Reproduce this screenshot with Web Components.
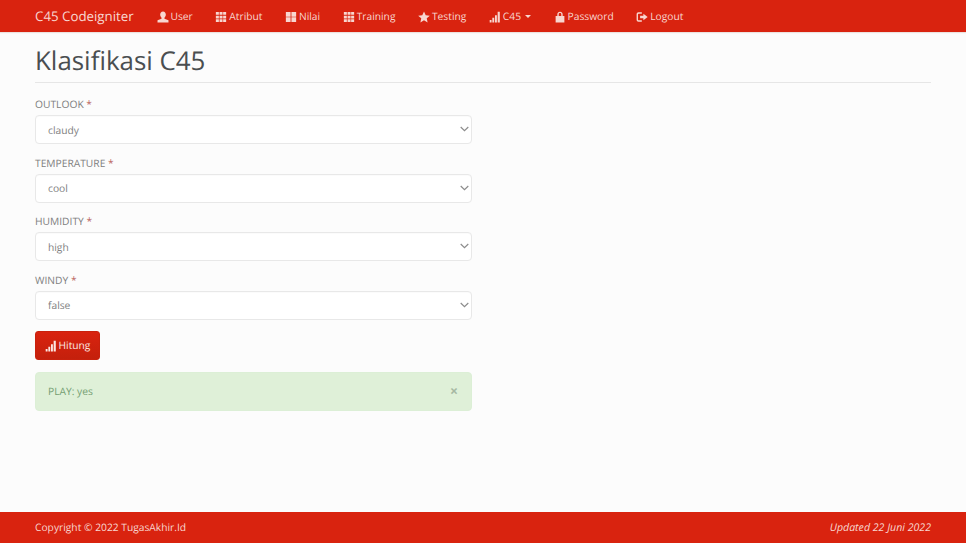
<!DOCTYPE html>
<html lang="id">
<head>
<meta charset="utf-8">
<title>Klasifikasi C45</title>
<style>
    html, body { margin: 0; height: 100%; }
    body {
        display: flex;
        flex-direction: column;
        height: 543px;
        overflow: hidden;
        background: #fcfcfc;
        font-family: "Open Sans", "Liberation Sans", sans-serif;
        font-size: 10.25px;
        color: #777;
        text-rendering: geometricPrecision;
    }
</style>
</head>
<body>
<app-navbar brand="C45 Codeigniter">
    <nav-link icon="user">User</nav-link>
    <nav-link icon="th">Atribut</nav-link>
    <nav-link icon="th-large">Nilai</nav-link>
    <nav-link icon="th">Training</nav-link>
    <nav-link icon="star">Testing</nav-link>
    <nav-link icon="signal" caret>C45</nav-link>
    <nav-link icon="lock">Password</nav-link>
    <nav-link icon="logout">Logout</nav-link>
</app-navbar>

<page-body heading="Klasifikasi C45">
    <form-select label="OUTLOOK" value="claudy"></form-select>
    <form-select label="TEMPERATURE" value="cool"></form-select>
    <form-select label="HUMIDITY" value="high"></form-select>
    <form-select label="WINDY" value="false"></form-select>
    <app-button icon="signal">Hitung</app-button>
    <app-alert>PLAY: yes</app-alert>
</page-body>

<app-footer updated="Updated 22 Juni 2022">Copyright © 2022 TugasAkhir.Id</app-footer>

<script>
// Glyph shapes, drawn on a 14x14 box
const ICONS = {
    user: '<path d="M7 .6c2.100 0 3.300 1.600 3.300 3.600 0 1.600-.7 3-1.600 3.700v1.100l4.700 1.800v2.600H.6v-2.600l4.700-1.800V7.900C4.400 7.200 3.700 5.800 3.700 4.200 3.700 2.200 4.900.6 7 .6z"/>',
    th: '<path d="M1 1.200h3.500v3.300H1zM5.300 1.200h3.500v3.300H5.300zM9.500 1.200H13v3.300H9.500zM1 5.400h3.500v3.300H1zM5.300 5.400h3.500v3.300H5.300zM9.500 5.400H13v3.300H9.500zM1 9.500h3.500v3.300H1zM5.300 9.500h3.500v3.300H5.300zM9.500 9.500H13v3.300H9.500z"/>',
    'th-large': '<path d="M1 1.200h5.500v5.400H1zM7.500 1.200H13v5.400H7.500zM1 7.400h5.500v5.400H1zM7.500 7.400H13v5.400H7.500z"/>',
    star: '<path d="M7 .5l2 4.400 4.800.5-3.600 3.200 1 4.700L7 10.900l-4.200 2.400 1-4.700L.2 5.400 5 4.900z"/>',
    signal: '<path d="M.8 10.500h2.200v3H.8zM3.900 8h2.200v5.500H3.900zM7 5h2.200v8.500H7zM10.100 1h2.500v12.500h-2.500z"/>',
    lock: '<path d="M3.900 5.800V4C3.900 2 5.200.8 7 .8S10.100 2 10.100 4v1.800h2v7.700H1.900V5.800zM5.500 5.800h3V4c0-1-.5-1.600-1.500-1.600S5.500 3 5.500 4z"/>',
    logout: '<path d="M6.800 1.500v1.700H3.300c-.7 0-1 .3-1 1v5.600c0 .7.3 1 1 1h3.500v1.700H3c-1.400 0-2.300-.9-2.300-2.300V3.800C.7 2.400 1.600 1.500 3 1.500zM8.600 3.200L13.600 7l-5 3.800V8.400H4.800V5.600h3.800z"/>'
};

function iconSvg(name, size) {
    return `<svg width="${size}" height="${size}" viewBox="0 0 14 14" fill="currentColor" aria-hidden="true">${ICONS[name]}</svg>`;
}

class AppNavbar extends HTMLElement {
    connectedCallback() {
        this.attachShadow({ mode: 'open' }).innerHTML = `
            <style>
                :host {
                    display: flex;
                    align-items: center;
                    flex: none;
                    height: 32px;
                    padding-left: 35px;
                    background: #d9230f;
                    box-shadow: 0 1px 1px rgba(120, 40, 20, .12);
                    color: #f8d6d0;
                }
                .brand { font-size: 13.300px; margin-right: 11.500px; white-space: nowrap; }
            </style>
            <span class="brand">${this.getAttribute('brand')}</span>
            <slot></slot>
        `;
    }
}

class NavLink extends HTMLElement {
    connectedCallback() {
        const caret = this.hasAttribute('caret') ? '<span class="caret"></span>' : '';
        this.attachShadow({ mode: 'open' }).innerHTML = `
            <style>
                :host {
                    display: flex;
                    align-items: center;
                    box-sizing: border-box;
                    height: 32px;
                    padding: 1px 11.250px 0;
                    white-space: nowrap;
                }
                svg { margin-right: 2px; }
                .caret {
                    margin-left: 4px;
                    border-top: 3.500px solid currentColor;
                    border-left: 3.500px solid transparent;
                    border-right: 3.500px solid transparent;
                }
            </style>
            ${iconSvg(this.getAttribute('icon'), 12)}<slot></slot>${caret}
        `;
    }
}

class PageBody extends HTMLElement {
    connectedCallback() {
        this.attachShadow({ mode: 'open' }).innerHTML = `
            <style>
                :host {
                    display: block;
                    flex: 1;
                    padding: 0 35px;
                }
                h1 {
                    margin: 0 0 13px;
                    height: 50px;
                    border-bottom: 1px solid #e6e6e6;
                    font-size: 25.900px;
                    font-weight: 400;
                    line-height: 56px;
                    color: #4a4e50;
                }
                .form {
                    display: flex;
                    flex-direction: column;
                    width: 437px;
                }
            </style>
            <h1>${this.getAttribute('heading')}</h1>
            <div class="form"><slot></slot></div>
        `;
    }
}

class FormSelect extends HTMLElement {
    connectedCallback() {
        const value = this.getAttribute('value');
        this.attachShadow({ mode: 'open' }).innerHTML = `
            <style>
                :host {
                    display: flex;
                    flex-direction: column;
                    gap: 2px;
                    height: 58.600px;
                }
                label { padding-top: 1px; line-height: 16px; color: #808080; }
                label b { font-weight: 400; color: #b9625a; }
                .field { position: relative; height: 29px; }
                select {
                    display: block;
                    box-sizing: border-box;
                    width: 100%;
                    height: 29px;
                    padding: 2px 12px 0;
                    border: 1px solid #e8e8e8;
                    border-radius: 4px;
                    background: #fff;
                    box-shadow: inset 0 1px 1px rgba(0, 0, 0, .02);
                    font: inherit;
                    color: #808080;
                    text-rendering: geometricPrecision;
                    outline: none;
                    appearance: none;
                }
                svg { position: absolute; right: 3px; top: 11px; }
            </style>
            <label>${this.getAttribute('label')} <b>*</b></label>
            <div class="field">
                <select><option>${value}</option></select>
                <svg width="9" height="6" viewBox="0 0 9 6" fill="none" stroke="#8c8c8c" stroke-width="1.200"><path d="M.7 1l3.800 3.600L8.300 1"/></svg>
            </div>
        `;
    }
}

class AppButton extends HTMLElement {
    connectedCallback() {
        this.attachShadow({ mode: 'open' }).innerHTML = `
            <style>
                :host {
                    display: inline-flex;
                    align-self: flex-start;
                    align-items: center;
                    box-sizing: border-box;
                    height: 29px;
                    margin-top: 1px;
                    padding: 0 8.500px 0 9px;
                    border: 1px solid #c9210d;
                    border-radius: 3px;
                    background: linear-gradient(#d9230f, #c4200c);
                    color: #fbe6e2;
                }
                svg { margin-right: 1.500px; }
            </style>
            ${iconSvg(this.getAttribute('icon'), 12)}<slot></slot>
        `;
    }
}

class AppAlert extends HTMLElement {
    connectedCallback() {
        this.attachShadow({ mode: 'open' }).innerHTML = `
            <style>
                :host {
                    display: flex;
                    align-items: center;
                    justify-content: space-between;
                    box-sizing: border-box;
                    height: 39px;
                    margin-top: 12px;
                    padding: 0 13px 0 12px;
                    border: 1px solid #dcefd6;
                    border-radius: 4px;
                    background: #dff0d8;
                    color: #749e72;
                }
                .close { color: #a6b8a3; font-size: 14px; font-weight: 700; line-height: 1; }
            </style>
            <slot></slot>
            <span class="close">×</span>
        `;
    }
}

class AppFooter extends HTMLElement {
    connectedCallback() {
        this.attachShadow({ mode: 'open' }).innerHTML = `
            <style>
                :host {
                    display: flex;
                    align-items: center;
                    justify-content: space-between;
                    flex: none;
                    height: 31px;
                    padding: 0 35px;
                    background: #d9230f;
                    color: #f8d6d0;
                }
                em { font-style: italic; font-size: 10.600px; }
            </style>
            <span><slot></slot></span>
            <em>${this.getAttribute('updated')}</em>
        `;
    }
}

customElements.define('app-navbar', AppNavbar);
customElements.define('nav-link', NavLink);
customElements.define('page-body', PageBody);
customElements.define('form-select', FormSelect);
customElements.define('app-button', AppButton);
customElements.define('app-alert', AppAlert);
customElements.define('app-footer', AppFooter);
</script>
</body>
</html>
